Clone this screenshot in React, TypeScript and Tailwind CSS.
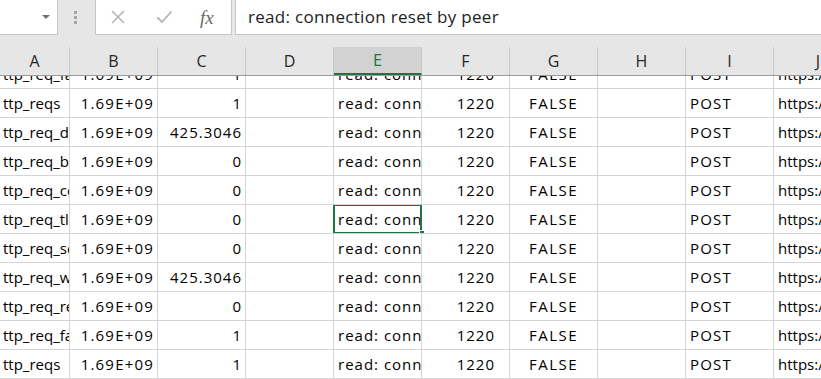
import React from 'react';

const font = { fontFamily: '"Open Sans", "Noto Sans", sans-serif' };

const names = [
  'ttp_req_failed',
  'ttp_reqs',
  'ttp_req_duration',
  'ttp_req_blocked',
  'ttp_req_connecting',
  'ttp_req_tls_handshaking',
  'ttp_req_sending',
  'ttp_req_waiting',
  'ttp_req_receiving',
  'ttp_req_failed',
  'ttp_reqs',
];
const values = ['1', '1', '425.3046', '0', '0', '0', '0', '425.3046', '0', '1', '1'];
const letters = ['A', 'B', 'C', 'D', 'E', 'F', 'G', 'H', 'I', 'J'];
const widths = ['w-[70px]', 'w-[88px]', 'w-[88px]', 'w-[88px]', 'w-[88px]', 'w-[88px]', 'w-[88px]', 'w-[88px]', 'w-[88px]', 'w-[88px]'];

const Cell: React.FC<{ w: string; align?: string; children?: React.ReactNode; last?: boolean }> = ({
  w,
  align = 'text-left pl-[4px]',
  children,
  last,
}) => (
  <div
    className={`${w} shrink-0 h-full overflow-hidden whitespace-nowrap leading-[29px] ${align} ${
      last ? '' : 'border-r border-[#d4d4d4]'
    }`}
  >
    {children}
  </div>
);

export default function App() {
  return (
    <div className="w-[821px] h-[379px] overflow-hidden bg-white text-[15px] text-black" style={font}>
      {/* formula bar */}
      <div className="h-[47px] bg-[#e6e6e6] flex items-start">
        <div className="w-[58px] h-[35px] bg-white border-r border-b border-[#c6c6c6] flex items-center justify-end pr-[7px]">
          <div className="w-0 h-0 border-l-[4px] border-r-[4px] border-t-[4px] border-l-transparent border-r-transparent border-t-[#707070]" />
        </div>
        <div className="w-[37px] h-[35px] flex flex-col items-center justify-center gap-[2px] pr-[2px]">
          <div className="w-[3px] h-[3px] bg-[#a6a6a6]" />
          <div className="w-[3px] h-[3px] bg-[#a6a6a6]" />
          <div className="w-[3px] h-[3px] bg-[#a6a6a6]" />
        </div>
        <div className="w-[137px] h-[35px] bg-white border-x border-b border-[#c6c6c6] flex items-center">
          <svg width="16" height="16" viewBox="0 0 16 16" className="ml-[14px]">
            <path d="M2 2 L14 14 M14 2 L2 14" stroke="#b3b3b3" strokeWidth="1.5" fill="none" />
          </svg>
          <svg width="17" height="16" viewBox="0 0 17 16" className="ml-[30px]">
            <path d="M1.5 8.5 L6 13 L15.5 2.5" stroke="#b3b3b3" strokeWidth="1.8" fill="none" />
          </svg>
          <span
            className="ml-[27px] text-[#6a6a6a] italic text-[19px] leading-none"
            style={{ fontFamily: '"Liberation Serif", serif' }}
          >
            fx
          </span>
        </div>
        <div className="flex-1 ml-[3px] h-[35px] bg-white border-l border-b border-[#c6c6c6] flex items-center pl-[12px] text-[17px] tracking-[0.3px] text-[#222]">
          read: connection reset by peer
        </div>
      </div>

      {/* column headers */}
      <div className="h-[29px] bg-[#e6e6e6] flex border-b border-[#9b9b9b] overflow-hidden">
        {letters.map((l, i) => (
          <div
            key={l}
            className={`${widths[i]} shrink-0 h-full flex items-center justify-center text-[16px] ${
              i < 9 ? 'border-r border-[#c8c8c8]' : ''
            } ${l === 'E' ? 'bg-[#d2d2d2] text-[#217346] border-b-2 border-b-[#217346]' : 'text-[#262626]'}`}
          >
            {l}
          </div>
        ))}
      </div>

      {/* grid */}
      <div className="h-[303px] overflow-hidden">
        <div className="-mt-[16px]">
          {names.map((n, r) => (
            <div key={r} className="h-[29px] flex border-b border-[#d4d4d4] overflow-hidden">
              <Cell w={widths[0]} align="text-left pl-[3px]">{n}</Cell>
              <Cell w={widths[1]} align="text-right pr-[3px] tracking-[1.2px]">1.69E+09</Cell>
              <Cell w={widths[2]} align="text-right pr-[3px] tracking-[1px]">{values[r]}</Cell>
              <Cell w={widths[3]} />
              <div className="w-[88px] shrink-0 h-full relative border-r border-[#d4d4d4]">
                <div className="h-full overflow-hidden whitespace-nowrap leading-[29px] pl-[4px] tracking-[1px]">
                  read: connection reset by peer
                </div>
                {r === 5 && (
                  <>
                    <div className="absolute -top-[1px] -left-[1px] -right-[1px] -bottom-[1px] border-2 border-[#217346]" />
                    <div className="absolute -right-[4px] -bottom-[3px] w-[6px] h-[6px] bg-[#217346] border border-white" />
                  </>
                )}
              </div>
              <Cell w={widths[5]} align="text-right pr-[14px] tracking-[1px]">1220</Cell>
              <Cell w={widths[6]} align="text-center tracking-[1.5px]">FALSE</Cell>
              <Cell w={widths[7]} />
              <Cell w={widths[8]} align="text-left pl-[4px] tracking-[1.2px]">POST</Cell>
              <Cell w={widths[9]} last>https://example.com</Cell>
            </div>
          ))}
        </div>
      </div>
    </div>
  );
}
